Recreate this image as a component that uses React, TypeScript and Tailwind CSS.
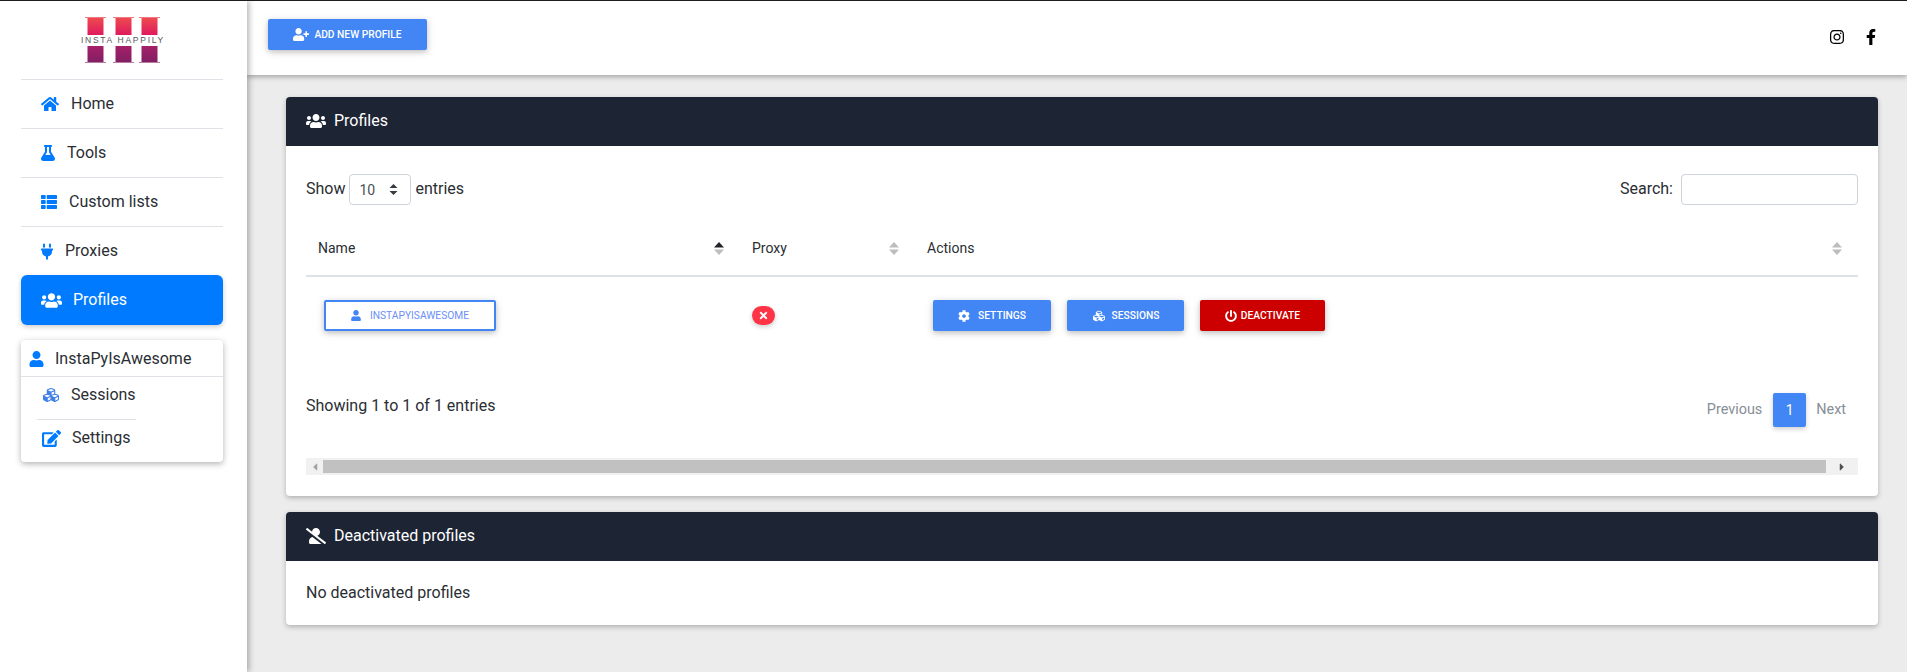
import type { ReactNode } from "react";
import { FaHome, FaFlask, FaThList, FaPlug, FaUsers, FaUser, FaCubes, FaEdit, FaUserPlus, FaCog, FaPowerOff, FaTimes, FaUserSlash, FaInstagram, FaFacebookF, FaCaretLeft, FaCaretRight } from "react-icons/fa";

const navItems = [
  { label: "Home", icon: <FaHome className="w-[18px] h-[18px]" /> },
  { label: "Tools", icon: <FaFlask className="w-[14px] h-4" /> },
  { label: "Custom lists", icon: <FaThList className="w-4 h-4" /> },
  { label: "Proxies", icon: <FaPlug className="w-3 h-[17px]" /> },
];

const Logo = () => (
  <svg width="90" height="50" viewBox="0 0 90 50" className="block">
    <defs>
      <linearGradient id="top" x1="0" y1="0" x2="0" y2="1">
        <stop offset="0" stopColor="#ee4a4f" />
        <stop offset="1" stopColor="#df1a5e" />
      </linearGradient>
      <linearGradient id="bottom" x1="0" y1="0" x2="0" y2="1">
        <stop offset="0" stopColor="#a52068" />
        <stop offset="1" stopColor="#821f63" />
      </linearGradient>
    </defs>
    {[5, 33, 59].map((x) => (
      <g key={x}>
        <rect x={x} y="0" width="21" height="1" fill="#ee7a80" />
        <rect x={x + 2.5} y="1" width="16" height="17" fill="url(#top)" />
        <rect x={x + 2.5} y="29" width="16" height="16" fill="url(#bottom)" />
        <rect x={x} y="45" width="21" height="1" fill="#b97aa0" />
      </g>
    ))}
    <text x="1" y="26" fontFamily="Liberation Sans, sans-serif" fontSize="8.5" letterSpacing="1.72" fill="#55555a">
      INSTA HAPPILY
    </text>
  </svg>
);

const SortIcon = ({ active }: { active?: boolean }) => (
  <svg width="10" height="13" viewBox="0 0 10 13" className="shrink-0">
    <path d="M5 0 L10 5.5 L0 5.5 Z" fill={active ? "#212529" : "#bdbdbd"} />
    <path d="M5 13 L10 7.5 L0 7.5 Z" fill="#bdbdbd" />
  </svg>
);

const Btn = ({ icon, children, className }: { icon: ReactNode; children: ReactNode; className: string }) => (
  <button className={`flex items-center justify-center h-[31px] rounded-[2px] text-white text-[10.24px] font-medium uppercase shadow-[0_2px_5px_rgba(0,0,0,0.16),0_2px_10px_rgba(0,0,0,0.12)] ${className}`}>
    {icon}
    {children}
  </button>
);

const CardHeader = ({ icon, title }: { icon: ReactNode; title: string }) => (
  <div className="flex items-center gap-2 h-[49px] pl-5 pb-[1px] bg-[#1d2433] text-white rounded-t-[4px]">
    {icon}
    <span className="text-base">{title}</span>
  </div>
);

export default function App() {
  return (
    <div className="flex h-screen overflow-hidden border-t border-[#1c1c1c] bg-[#ececec] text-[#2a2e33] font-['Roboto',sans-serif] text-base">
      <aside className="w-[247px] shrink-0 bg-white pl-[21px] pr-[24px] shadow-[2px_0_6px_rgba(0,0,0,0.3)] z-20">
        <div className="h-[79px] pt-4 pl-[59px] border-b border-[#dee2e6]">
          <Logo />
        </div>
        <nav>
          {navItems.map((item, i) => (
            <div key={item.label} className={`flex items-center gap-3 pl-5 ${i < 3 ? "h-[49px] border-b border-[#dee2e6]" : "h-[48px]"}`}>
              <span className="text-[#007bff] flex">{item.icon}</span>
              <span>{item.label}</span>
            </div>
          ))}
          <div className="flex items-center gap-[11px] h-[50px] pl-5 rounded-[6px] bg-[#007bff] text-white shadow-[0_2px_5px_rgba(0,0,0,0.2)]">
            <FaUsers className="w-[21px] h-[17px]" />
            <span>Profiles</span>
          </div>
        </nav>
        <div className="mt-[15px] h-[122px] bg-white rounded-[4px] shadow-[0_2px_6px_rgba(0,0,0,0.3)]">
          <div className="flex items-center gap-[11px] h-[37px] pl-2 pt-[1px] border-b border-[#dee2e6]">
            <FaUser className="text-[#007bff] w-[15px] h-[16px]" />
            <span>InstaPyIsAwesome</span>
          </div>
          <div className="flex items-center gap-[11px] h-[42px] pb-[6px] pl-[21px]">
            <FaCubes className="text-[#3f7fe8] w-[18px] h-4" />
            <span>Sessions</span>
          </div>
          <div className="ml-4 w-[99px] border-t border-[#dee2e6]" />
          <div className="flex items-center gap-[11px] h-[36px] pl-[21px]">
            <FaEdit className="text-[#007bff] w-[19px] h-[17px]" />
            <span>Settings</span>
          </div>
        </div>
      </aside>

      <div className="flex-1 flex flex-col min-w-0">
        <header className="flex items-center justify-between h-[74px] shrink-0 bg-white pl-[21px] pr-[29px] pb-[7px] shadow-[0_2px_5px_rgba(0,0,0,0.3)] z-10">
          <Btn className="w-[159px] gap-[5px] bg-[#4285f4]" icon={<FaUserPlus className="w-[16px] h-[13px]" />}>
            Add new profile
          </Btn>
          <div className="flex items-center gap-[19px] mt-[5px] text-black">
            <FaInstagram className="w-4 h-4" />
            <FaFacebookF className="w-[14px] h-4" />
          </div>
        </header>

        <main className="flex-1 pt-[22px] pl-[39px] pr-[29px]">
          <section className="bg-white rounded-[4px] shadow-[0_2px_5px_rgba(0,0,0,0.25)]">
            <CardHeader icon={<FaUsers className="w-5 h-4" />} title="Profiles" />
            <div className="h-[350px] px-5 pt-7">
              <div className="flex items-center justify-between h-[31px]">
                <div className="flex items-center gap-1">
                  <span className="pb-[2px]">Show</span>
                  <div className="flex items-center justify-between w-[62px] h-[31px] pl-[9px] pr-[12px] border border-[#ced4da] rounded-[4px] text-sm text-[#495057]">
                    <span>10</span>
                    <svg width="9" height="11" viewBox="0 0 9 11">
                      <path d="M4.5 0 L8.5 4 L0.5 4 Z M4.5 11 L8.5 7 L0.5 7 Z" fill="#343a40" />
                    </svg>
                  </div>
                  <span className="pb-[2px]">entries</span>
                </div>
                <div className="flex items-center gap-2">
                  <span className="pb-[2px]">Search:</span>
                  <div className="w-[177px] h-[31px] border border-[#ced4da] rounded-[4px]" />
                </div>
              </div>

              <div className="grid grid-cols-[435px_175px_1fr] items-center h-[72px] pt-[16px] border-b-2 border-[#dee2e6] text-sm">
                <div className="flex items-center justify-between pl-[12px] pr-[17px]"><span>Name</span><SortIcon active /></div>
                <div className="flex items-center justify-between pl-[11px] pr-[17px]"><span>Proxy</span><SortIcon /></div>
                <div className="flex items-center justify-between pl-[11px] pr-4"><span>Actions</span><SortIcon /></div>
              </div>

              <div className="grid grid-cols-[435px_175px_1fr] items-start h-[83px] pt-[23px]">
                <div className="pl-[18px]">
                  <button className="flex items-center justify-center gap-[9px] w-[172px] h-[31px] border-2 border-[#4285f4] rounded-[2px] text-[#6a8ff7] text-[10.24px] uppercase shadow-[0_2px_5px_rgba(0,0,0,0.16),0_2px_10px_rgba(0,0,0,0.12)]">
                    <FaUser className="w-[10px] h-[11px] text-[#4285f4]" />
                    InstaPyIsAwesome
                  </button>
                </div>
                <div className="pl-[11px] pt-[6px]">
                  <span className="flex items-center justify-center w-[23px] h-[19px] rounded-[10px] bg-[#ff3547] text-white shadow-[0_2px_5px_rgba(0,0,0,0.2)]">
                    <FaTimes className="w-[11px] h-[11px]" />
                  </span>
                </div>
                <div className="flex gap-4 pl-[17px]">
                  <Btn className="w-[118px] gap-2 bg-[#4285f4]" icon={<FaCog className="w-3 h-3" />}>Settings</Btn>
                  <Btn className="w-[117px] gap-[6px] bg-[#4285f4]" icon={<FaCubes className="w-[14px] h-3" />}>Sessions</Btn>
                  <Btn className="w-[125px] gap-1 bg-[#cc0000]" icon={<FaPowerOff className="w-3 h-3" />}>Deactivate</Btn>
                </div>
              </div>

              <div className="flex items-center justify-between h-[34px] mt-[33px]">
                <span className="pb-[8px]">Showing 1 to 1 of 1 entries</span>
                <div className="flex items-center text-[14.4px] text-[#868e96] pr-[12px]">
                  <span>Previous</span>
                  <span className="flex items-center justify-center w-[33px] h-[34px] ml-[11px] mr-[10px] rounded-[2px] bg-[#4285f4] text-white text-sm shadow-[0_2px_5px_rgba(0,0,0,0.2)]">1</span>
                  <span>Next</span>
                </div>
              </div>

              <div className="flex items-center h-[17px] mt-[31px] bg-[#f1f1f1] text-[#505050]">
                <span className="flex justify-center w-[17px]"><FaCaretLeft className="w-[10px] h-3 text-[#a3a3a3]" /></span>
                <div className="flex-1 h-[13px] bg-[#c1c1c1]" />
                <span className="flex justify-center w-8"><FaCaretRight className="w-[10px] h-3" /></span>
              </div>
            </div>
          </section>

          <section className="mt-4 bg-white rounded-[4px] shadow-[0_2px_5px_rgba(0,0,0,0.25)]">
            <CardHeader icon={<FaUserSlash className="w-5 h-4" />} title="Deactivated profiles" />
            <div className="h-[64px] flex items-center px-5">No deactivated profiles</div>
          </section>
        </main>
      </div>
    </div>
  );
}
